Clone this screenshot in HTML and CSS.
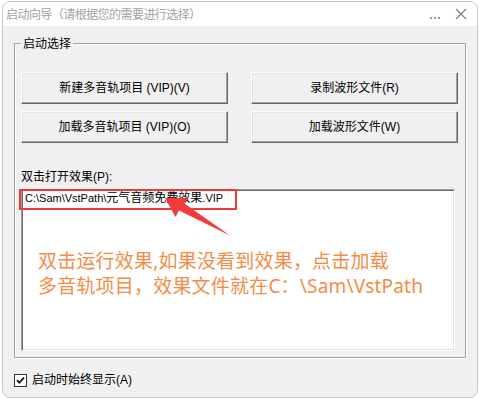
FILE: index.html
```html
<!DOCTYPE html>
<html lang="zh-CN">
<head>
<meta charset="utf-8">
<title>启动向导</title>
<link rel="stylesheet" href="styles.css">
</head>
<body>
<div class="window">
  <div class="titlebar">
    <span class="title">启动向导（请根据您的需要进行选择）</span>
    <div class="controls">
      <svg class="more" width="10" height="4" viewBox="0 0 10 4"><rect x="0" y="1" width="2" height="2" fill="#9a9a9a"/><rect x="4" y="1" width="2" height="2" fill="#9a9a9a"/><rect x="8" y="1" width="2" height="2" fill="#9a9a9a"/></svg>
      <svg class="close" width="12" height="12" viewBox="0 0 12 12"><path d="M1 1L11 11M11 1L1 11" stroke="#7a7a7a" stroke-width="1.1" fill="none"/></svg>
    </div>
  </div>
  <div class="client">
    <div class="group">
      <span class="group-label">启动选择</span>
      <div class="buttons">
        <div class="btn">新建多音轨项目 (VIP)(V)</div>
        <div class="btn">录制波形文件(R)</div>
        <div class="btn">加载多音轨项目 (VIP)(O)</div>
        <div class="btn">加载波形文件(W)</div>
      </div>
      <div class="field-label">双击打开效果(P):</div>
      <div class="textbox">
        <div class="path-line"><span class="lat">C:\Sam\VstPath\</span>元气音频免费效果<span class="lat">.VIP</span></div>
        <div class="note">双击运行效果,如果没看到效果，点击加载<br>多音轨项目，效果文件就在C：\Sam\VstPath</div>
        <div class="highlight"></div>
        <svg class="arrow" width="100" height="50" viewBox="140 190 100 50"><polygon points="166,199 189,199 185.5,204.5 231,236.5 180,211.5 176.5,218" fill="#f23c3c"/></svg>
      </div>
    </div>
    <div class="check-row">
      <span class="checkbox"><svg width="11" height="11" viewBox="0 0 11 11"><path d="M2 5.2L4.3 7.6L9 2.6" stroke="#111" stroke-width="1.8" fill="none"/></svg></span>
      <span class="check-label">启动时始终显示(A)</span>
    </div>
  </div>
</div>
</body>
</html>
```

FILE: styles.css
```css
* { box-sizing: border-box; }

html, body {
  margin: 0;
  padding: 0;
  background: #ffffff;
}

body {
  font-family: "Liberation Sans", "Noto Sans CJK SC", sans-serif;
  font-size: 12px;
  color: #000;
}

.window {
  margin: 1px 0 0 2px;
  width: 476px;
  height: 397px;
  border: 1px solid #c6c6c6;
  border-radius: 8px;
  overflow: hidden;
  display: flex;
  flex-direction: column;
  background: #f0f0f0;
}

.titlebar {
  height: 24px;
  flex: none;
  background: #ffffff;
  display: flex;
  align-items: center;
  padding-left: 3px;
}

.title {
  font-family: "Noto Sans CJK SC", sans-serif;
  font-size: 12px;
  line-height: 16px;
  color: #a3a3a3;
  letter-spacing: -0.55px;
}

.controls {
  margin-left: auto;
  display: flex;
  align-items: center;
  gap: 15px;
  padding-right: 10px;
}

.more { margin-top: 8px; }

.client {
  flex: 1;
  padding: 17px 12px 0 11px;
}

.group {
  position: relative;
  width: 452px;
  height: 315px;
  border: 1px solid #a0a0a0;
  box-shadow: inset 1px 1px 0 #ffffff, 1px 1px 0 #ffffff;
  padding: 28px 6px 0 6px;
}

.group-label {
  position: absolute;
  left: 6px;
  top: -9px;
  padding: 0 2px;
  background: #f0f0f0;
  font-family: "Noto Sans CJK SC", sans-serif;
  font-size: 12px;
  line-height: 16px;
}

.buttons {
  display: grid;
  grid-template-columns: 207px 207px;
  grid-auto-rows: 32px;
  column-gap: 23px;
  row-gap: 7px;
}

.btn {
  display: flex;
  align-items: center;
  justify-content: center;
  background: #f0f0f0;
  border: 1px solid;
  border-color: #ffffff #696969 #696969 #ffffff;
  box-shadow: inset -1px -1px 0 #a0a0a0, inset 1px 1px 0 #e3e3e3;
  line-height: 16px;
  padding-bottom: 1px;
}

.field-label {
  margin-top: 26px;
  line-height: 16px;
}

.textbox {
  position: relative;
  margin-top: 4px;
  width: 434px;
  height: 162px;
  background: #ffffff;
  border: 1px solid;
  border-color: #a0a0a0 #ffffff #ffffff #a0a0a0;
  box-shadow: inset 1px 1px 0 #696969, inset -1px -1px 0 #e3e3e3;
  padding: 1px 2px 0 2px;
}

.path-line {
  line-height: 14px;
  padding-left: 1px;
}

.lat { font-size: 11px; }

.note {
  margin-top: 44px;
  padding-left: 14px;
  font-family: "Noto Sans", "Noto Sans CJK SC", sans-serif;
  font-size: 19px;
  line-height: 25px;
  color: #f28c46;
  letter-spacing: 0.2px;
}

.highlight {
  position: absolute;
  left: -3px;
  top: -1px;
  width: 218px;
  height: 21px;
  border: 2px solid #ec3a3a;
}

.arrow {
  position: absolute;
  left: 117px;
  top: -1px;
}

.check-row {
  display: flex;
  align-items: center;
  margin-top: 14px;
  padding-left: 0;
}

.checkbox {
  width: 13px;
  height: 13px;
  border: 1px solid #333333;
  background: #ffffff;
  display: flex;
  align-items: center;
  justify-content: center;
}

.check-label {
  margin-left: 5px;
  line-height: 16px;
}
```
